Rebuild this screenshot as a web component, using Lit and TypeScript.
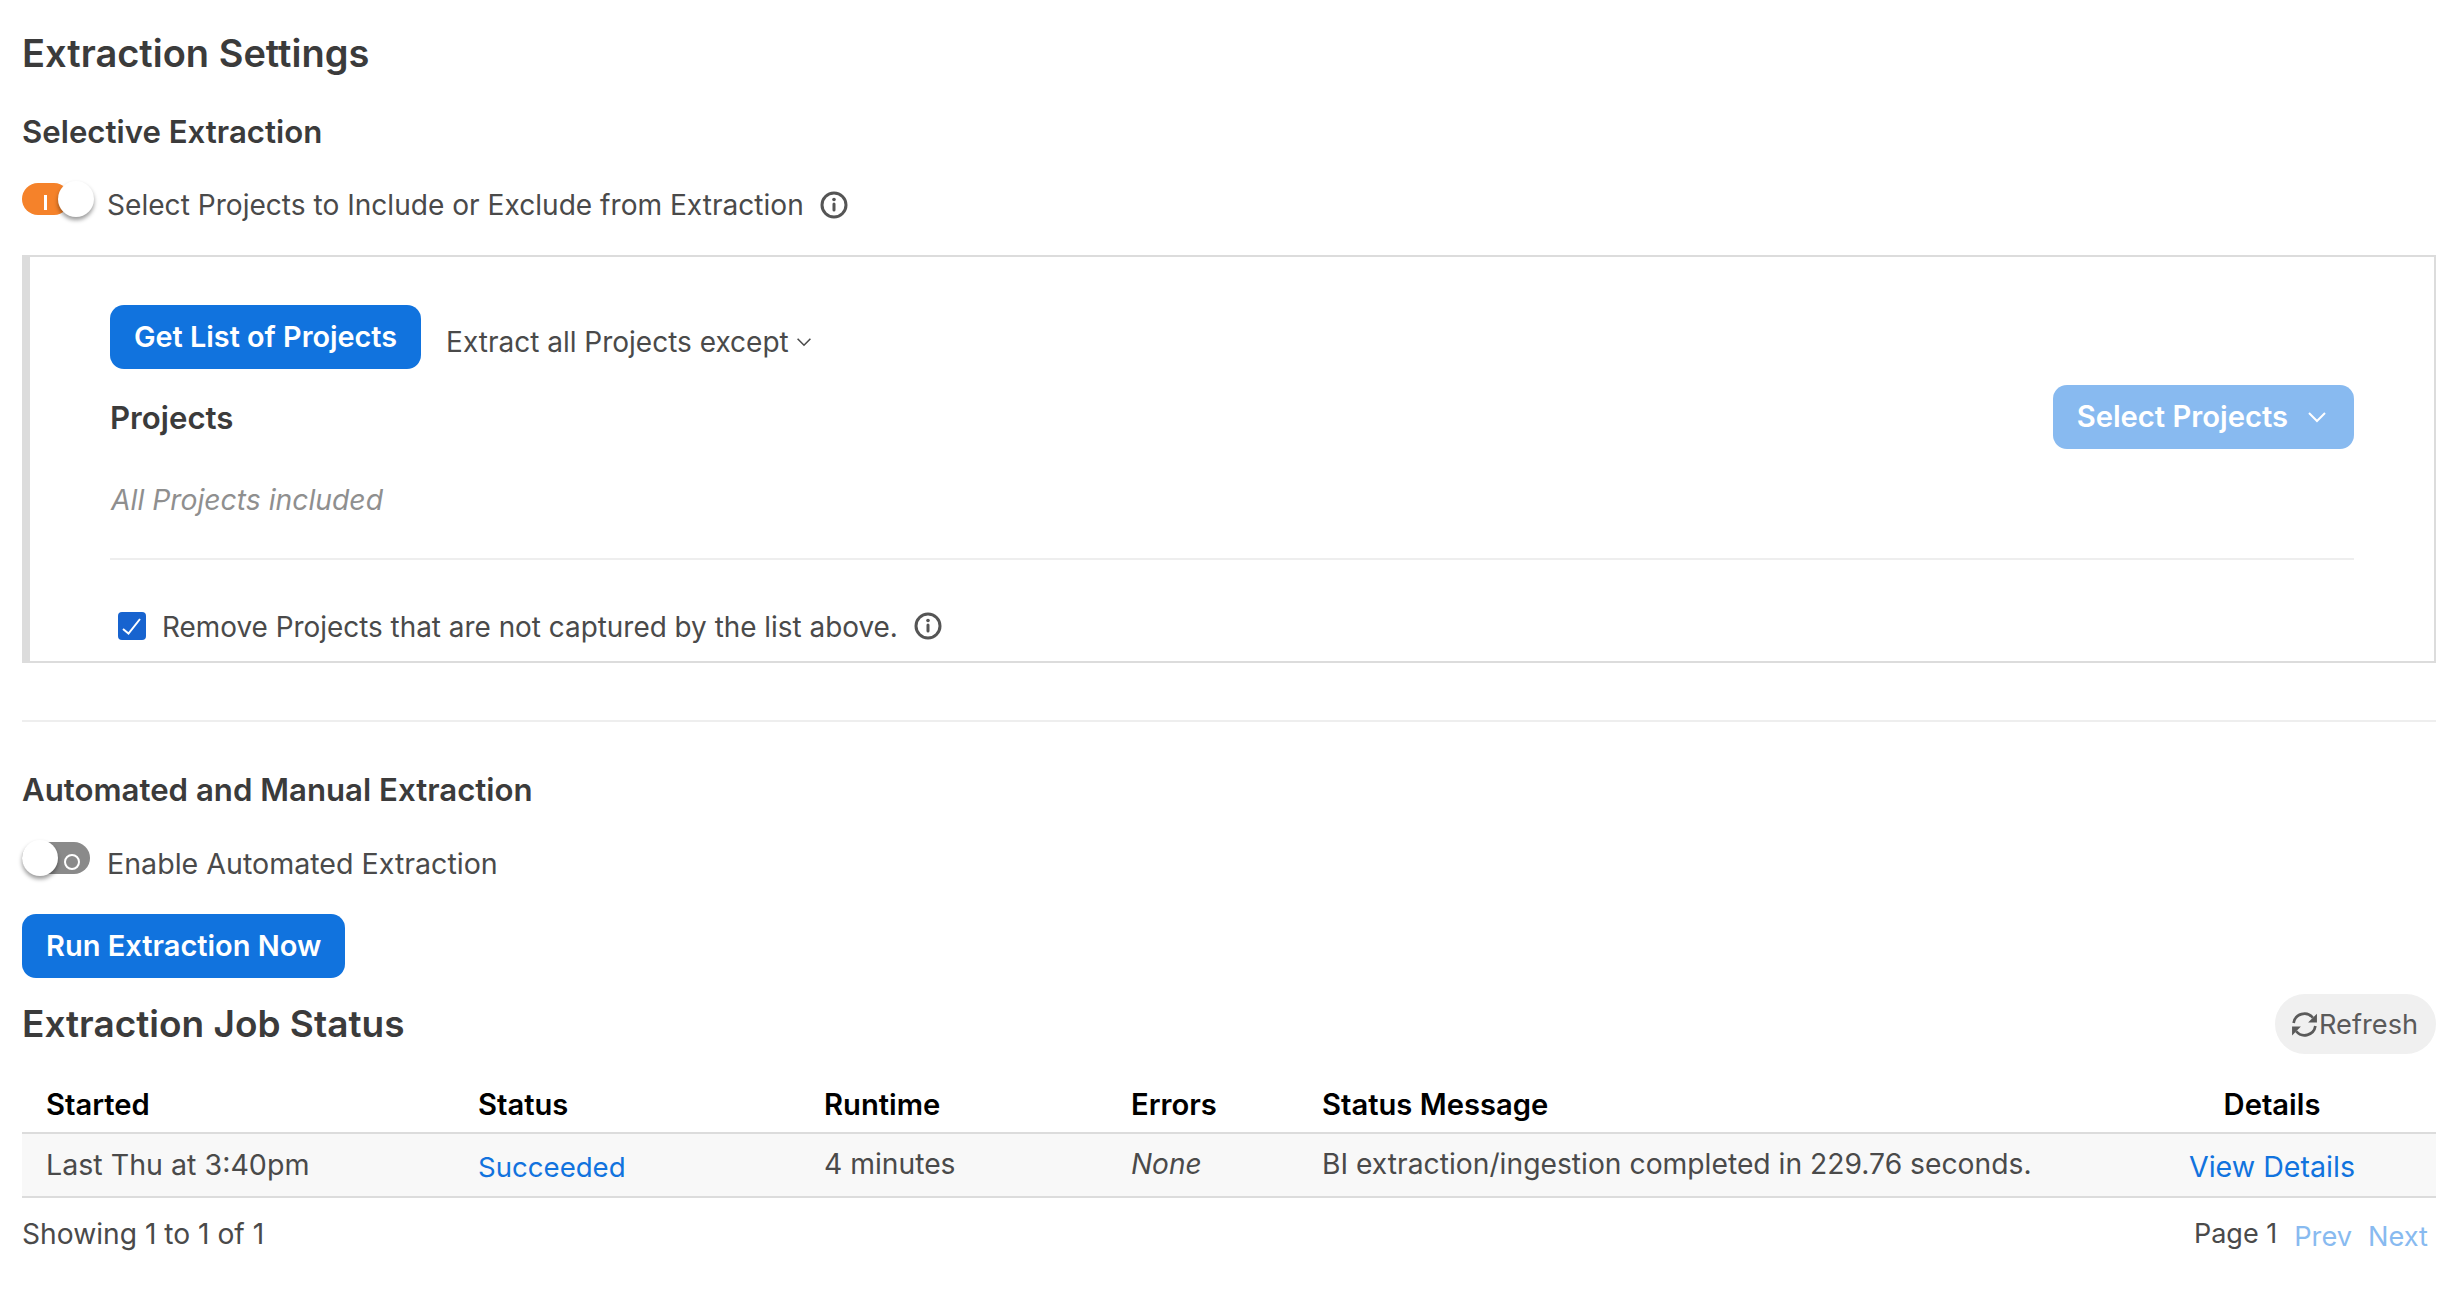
import { LitElement, html, css } from "lit";
import { customElement } from "lit/decorators.js";

const info = html`<svg class="info" viewBox="0 0 28 28" fill="none" stroke="#555" stroke-width="3"><circle cx="14" cy="14" r="12"/><path d="M14 13v6" stroke-linecap="round"/><circle cx="14" cy="8.5" r="1.8" fill="#555" stroke="none"/></svg>`;
const chev = (c: string, s: number) => html`<svg width=${s} height=${s} viewBox="0 0 20 20" fill="none" stroke=${c} stroke-width="2"><path d="M2 6l8 8 8-8"/></svg>`;

@customElement("app-root")
export class AppRoot extends LitElement {
  static styles = css`
    :host { display: block; font-family: Inter, "Liberation Sans", sans-serif; color: #4a4a4a; font-size: 28px; background: #fff; height: 1304px; overflow: hidden; }
    .page { padding: 30px 26px 0 22px; }
    h1 { margin: 0; font-size: 38px; line-height: 46px; font-weight: 600; color: #3b3b3b; }
    .jobs h1 { font-size: 37px; }
    h2 { margin: 0; font-size: 31.2px; line-height: 40px; font-weight: 600; color: #3b3b3b; }
    .sel { margin-top: 36px; }
    .row { display: flex; align-items: center; height: 40px; }
    .toggle { position: relative; height: 32px; border-radius: 16px; flex: none; }
    .toggle.on { background: #f5822a; width: 48px; }
    .toggle.off { background: #8a8a8a; width: 68px; }
    .knob { position: absolute; top: -2px; width: 36px; height: 36px; border-radius: 50%; background: #fff; box-shadow: 0 3px 4px rgba(0,0,0,.4); }
    .on .knob { left: 36px; }
    .off .knob { left: 0; }
    .mark-i { position: absolute; left: 22px; top: 12px; width: 3px; height: 15px; background: #fff; }
    .mark-o { position: absolute; left: 42px; top: 12px; width: 12px; height: 12px; border: 2px solid #fff; border-radius: 50%; }
    .info { width: 28px; height: 28px; flex: none; }
    .t1 { margin-top: 33px; }
    .t1 .lbl { margin-left: 37px; font-size: 28.1px; }
    .t1 .toggle { margin-top: -12px; }
    .t1 .info { margin-left: 16px; }
    .panel { margin-top: 30px; border: 2px solid #dcdcdc; border-left-width: 8px; height: 408px; box-sizing: border-box; padding: 48px 80px 0 80px; }
    .btn { display: inline-flex; align-items: center; height: 64px; padding: 0 24px; box-sizing: border-box; border-radius: 14px; background: #1173de; color: #fff; font-weight: 600; font-size: 28.8px; padding-bottom: 1px; }
    .btnrow { height: 64px; }
    .ex { margin-left: 25px; margin-top: 9px; display: flex; align-items: center; gap: 7px; }
    .proj { display: flex; align-items: center; justify-content: space-between; margin-top: 16px; }
    .proj h2 { margin-top: 2px; }
    .sp { background: #88baf0; gap: 19px; font-size: 29.2px; padding-right: 27px; }
    .inc { font-style: italic; color: #8f8f8f; margin-top: 34px; margin-left: 1px; line-height: 34px; font-size: 28.3px; }
    .hr { height: 2px; background: #eeeeee; margin-top: 41px; }
    .cbrow { margin-top: 46px; margin-left: 8px; }
    .cb { width: 28px; height: 28px; border-radius: 4px; background: #1763cf; flex: none; display: flex; align-items: center; justify-content: center; }
    .cbrow .lbl { margin-left: 16px; font-size: 27.9px; padding-top: 1px; }
    .cbrow .info { margin-left: 16px; }
    .outer { height: 2px; background: #eeeeee; margin-top: 57px; }
    .auto { margin-top: 48px; }
    .t2 { margin-top: 33px; }
    .t2 .toggle { margin-top: -11px; }
    .t2 .lbl { margin-left: 17px; font-size: 28.6px; }
    .run { margin-top: 31px; font-size: 29px; }
    .jobs { display: flex; justify-content: space-between; align-items: center; margin-top: 16px; }
    .refresh { display: flex; align-items: center; gap: 0; height: 60px; width: 161px; box-sizing: border-box; padding: 0 0 0 15px; background: #f0f0f0; border-radius: 30px; color: #5a5a5a; font-size: 27.2px; }
    .grid { display: grid; grid-template-columns: 432px 346px 307px 191px 1fr 328px; padding-left: 24px; box-sizing: border-box; }
    .thead { margin-top: 20px; height: 60px; padding-top: 3px; align-items: center; border-bottom: 2px solid #dcdcdc; font-weight: 600; color: #000; font-size: 29.2px; }
    .tbody { height: 64px; align-items: center; background: #f8f8f8; border-bottom: 2px solid #dcdcdc; padding-bottom: 2px; }
    .tbody > span { font-size: 28.25px; }
    .c { text-align: center; }
    a { color: #1173de; margin-top: 5px; font-size: 27.6px; }
    .tbody a.big, .tbody span.big { font-size: 28.6px; }
    .foot { display: flex; justify-content: space-between; align-items: center; margin-top: 17px; font-size: 28.2px; }
    .pager { display: flex; gap: 16px; padding-right: 8px; font-size: 27px; }
    .pager span { margin: 2px 1px 0 -3px; }
    .pager a { color: #88baf0; font-size: 27.2px; }
  `;
  render() {
    return html`<div class="page">
      <h1>Extraction Settings</h1>
      <h2 class="sel">Selective Extraction</h2>
      <div class="row t1">
        <div class="toggle on"><span class="mark-i"></span><span class="knob"></span></div>
        <span class="lbl">Select Projects to Include or Exclude from Extraction</span>${info}
      </div>
      <div class="panel">
        <div class="row btnrow">
          <div class="btn">Get List of Projects</div>
          <div class="ex">Extract all Projects except ${chev("#4a4a4a", 16)}</div>
        </div>
        <div class="proj"><h2>Projects</h2><div class="btn sp">Select Projects ${chev("#fff", 20)}</div></div>
        <div class="inc">All Projects included</div>
        <div class="hr"></div>
        <div class="row cbrow">
          <div class="cb"><svg width="28" height="28" viewBox="0 0 28 28" fill="none" stroke="#fff" stroke-width="2"><path d="M5 17l5.5 4.5L22 7"/></svg></div>
          <span class="lbl">Remove Projects that are not captured by the list above.</span>${info}
        </div>
      </div>
      <div class="outer"></div>
      <h2 class="auto">Automated and Manual Extraction</h2>
      <div class="row t2">
        <div class="toggle off"><span class="mark-o"></span><span class="knob"></span></div>
        <span class="lbl">Enable Automated Extraction</span>
      </div>
      <div class="btn run">Run Extraction Now</div>
      <div class="jobs"><h1>Extraction Job Status</h1>
        <div class="refresh"><svg width="29" height="29" viewBox="0 0 28 28" fill="none" stroke="#5a5a5a" stroke-width="2.6"><path d="M3.5 12.5A10.5 10.5 0 0 1 22 7.5"/><path d="M24.5 15.5A10.5 10.5 0 0 1 6 20.5"/><path d="M26 3.5v8.5h-8.5z" fill="#5a5a5a" stroke="none"/><path d="M2 24.5V16h8.5z" fill="#5a5a5a" stroke="none"/></svg>Refresh</div>
      </div>
      <div class="grid thead"><span>Started</span><span>Status</span><span>Runtime</span><span>Errors</span><span>Status Message</span><span class="c">Details</span></div>
      <div class="grid tbody"><span class="big">Last Thu at 3:40pm</span><a>Succeeded</a><span>4 minutes</span><em>None</em><span>BI extraction/ingestion completed in 229.76 seconds.</span><a class="c big">View Details</a></div>
      <div class="foot"><span>Showing 1 to 1 of 1</span><div class="pager"><span>Page 1</span><a>Prev</a><a>Next</a></div></div>
    </div>`;
  }
}
